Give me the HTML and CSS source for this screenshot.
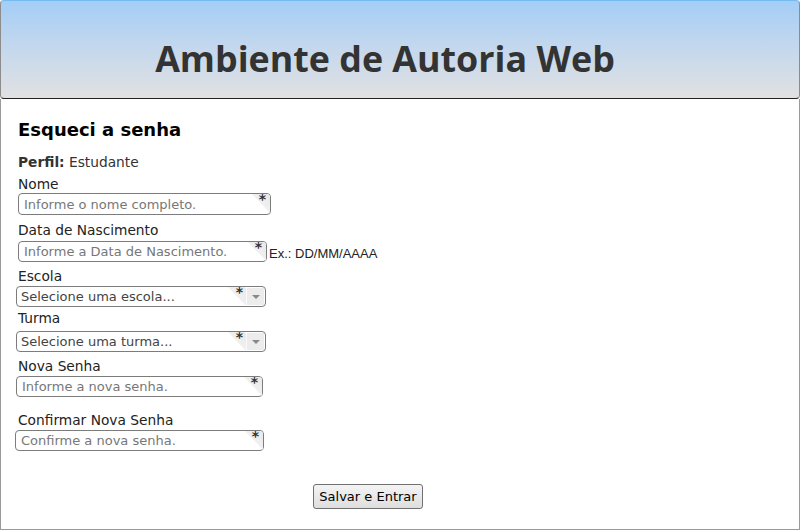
FILE: index.html
```html
<!DOCTYPE html>
<html lang="pt-BR">
<head>
<meta charset="utf-8">
<title>Ambiente de Autoria Web</title>
<link rel="stylesheet" href="styles.css">
</head>
<body>
<header class="topbar">
  <h1 class="title">Ambiente de Autoria Web</h1>
</header>
<main class="content">
  <h2 class="page-title">Esqueci a senha</h2>
  <p class="perfil"><b>Perfil:</b> Estudante</p>

  <div class="field f-nome">
    <label class="lbl" for="nome">Nome</label>
    <span class="ctl req w-nome"><input id="nome" class="inp" type="text" placeholder="Informe o nome completo."></span>
  </div>

  <div class="field f-data">
    <label class="lbl" for="nasc">Data de Nascimento</label>
    <div class="row">
      <span class="ctl req w-data"><input id="nasc" class="inp" type="text" placeholder="Informe a Data de Nascimento."></span>
      <span class="hint">Ex.: DD/MM/AAAA</span>
    </div>
  </div>

  <div class="field f-escola">
    <label class="lbl" for="escola">Escola</label>
    <span class="ctl req sel w-sel"><select id="escola" class="inp select"><option>Selecione uma escola...</option></select><span class="arrow"></span></span>
  </div>

  <div class="field f-turma">
    <label class="lbl" for="turma">Turma</label>
    <span class="ctl req sel w-sel"><select id="turma" class="inp select"><option>Selecione uma turma...</option></select><span class="arrow"></span></span>
  </div>

  <div class="field f-nova">
    <label class="lbl" for="nova">Nova Senha</label>
    <span class="ctl req w-nova"><input id="nova" class="inp" type="password" placeholder="Informe a nova senha."></span>
  </div>

  <div class="field f-conf">
    <label class="lbl" for="conf">Confirmar Nova Senha</label>
    <span class="ctl req w-conf"><input id="conf" class="inp" type="password" placeholder="Confirme a nova senha."></span>
  </div>

  <div class="actions">
    <button class="btn" type="button">Salvar e Entrar</button>
  </div>
</main>
</body>
</html>
```
FILE: styles.css
```css
html, body {
  margin: 0;
  padding: 0;
}
body {
  width: 800px;
  height: 530px;
  display: flex;
  flex-direction: column;
  font-family: "DejaVu Sans", Verdana, sans-serif;
  color: #222;
  background: #fff;
}
.topbar {
  box-sizing: border-box;
  height: 99px;
  flex: none;
  border: 1px solid #8c8c8c;
  border-top-color: #74bbef;
  border-bottom-color: #222;
  border-radius: 4px;
  background: linear-gradient(#a4cdf6 0%, #c2d7ee 45%, #e1e1e2 100%);
  display: flex;
  justify-content: center;
  align-items: flex-start;
  padding: 40px 30px 0 0;
}
.title {
  margin: 0;
  font-family: "Open Sans", "DejaVu Sans", sans-serif;
  font-weight: 700;
  font-size: 35.8px;
  line-height: 35px;
  color: #333;
}
.content {
  flex: 1;
  box-sizing: border-box;
  border: 1px solid #9a9a9a;
  border-top: 0;
  padding: 20px 0 0 17px;
}
.page-title {
  margin: 0;
  font-size: 18px;
  line-height: 22px;
  font-weight: 700;
  color: #000;
}
.perfil {
  margin: 12px 0 0;
  font-size: 13.75px;
  line-height: 18px;
  color: #333;
}
.perfil b {
  color: #333;
}
.field {
  display: flex;
  flex-direction: column;
  align-items: flex-start;
}
.lbl {
  display: block;
  font-size: 13.75px;
  line-height: 18px;
  color: #222;
}
.row {
  display: flex;
  align-items: flex-end;
}
.hint {
  font-family: "Liberation Sans", Arial, sans-serif;
  font-size: 13px;
  line-height: 15px;
  color: #222;
  margin-left: 2px;
  margin-bottom: 1px;
}
.ctl {
  position: relative;
  display: block;
  height: 21px;
}
.inp {
  box-sizing: border-box;
  width: 100%;
  height: 100%;
  margin: 0;
  border: 1px solid #7c7c7c;
  border-radius: 4px;
  background: #fff;
  font-family: "DejaVu Sans", Verdana, sans-serif;
  font-size: 13px;
  color: #444;
  padding: 0 5px;
  outline: none;
}
.inp::placeholder {
  color: #777;
}
.req::before {
  content: "";
  position: absolute;
  top: 1px;
  right: 1px;
  width: 18px;
  height: 19px;
  border-top-right-radius: 3px;
  background: linear-gradient(to bottom left, #e9e9e9 0%, #f0f0f0 49%, transparent 51%);
  pointer-events: none;
}
.req::after {
  content: "*";
  position: absolute;
  top: -2px;
  right: 5px;
  font-family: "DejaVu Sans", sans-serif;
  font-weight: 700;
  font-size: 14px;
  line-height: 16px;
  color: #333;
  pointer-events: none;
}
.sel::before {
  right: 20px;
}
.sel::after {
  right: 23px;
}
.select {
  -webkit-appearance: none;
  appearance: none;
  padding: 0 4px;
}
.arrow {
  position: absolute;
  top: 2px;
  right: 2px;
  width: 17px;
  height: 17px;
  background: #ececec;
  border-left: 1px solid #fafafa;
  pointer-events: none;
}
.arrow::after {
  content: "";
  position: absolute;
  left: 5px;
  top: 7px;
  border-left: 4px solid transparent;
  border-right: 4px solid transparent;
  border-top: 4px solid #888;
}

/* per-field spacing, matching the original form */
.f-nome { margin-top: 4px; }
.f-nome .ctl { height: 22px; }
.w-nome { width: 253px; }

.f-data { margin-top: 6px; }
.f-data .lbl { margin-bottom: 2px; }
.w-data { width: 249px; }

.f-escola { margin-top: 5px; }
.f-escola .lbl { margin-bottom: 1px; }
.w-sel { width: 250px; margin-left: -2px; }

.f-turma { margin-top: 2px; }
.f-turma .lbl { margin-bottom: 4px; }

.f-nova { margin-top: 5px; }
.f-nova .lbl { margin-bottom: 1px; }
.w-nova { width: 247px; margin-left: -2px; }

.f-conf { margin-top: 14px; }
.f-conf .lbl { margin-bottom: 1px; }
.w-conf { width: 249px; margin-left: -3px; }

.actions {
  margin-top: 33px;
  padding-left: 295px;
}
.btn {
  box-sizing: border-box;
  width: 110px;
  height: 25px;
  padding: 0;
  border: 1px solid #707070;
  border-radius: 3px;
  background: linear-gradient(#f4f4f4, #dedede);
  font-family: "DejaVu Sans", Verdana, sans-serif;
  font-size: 13px;
  color: #000;
}
```
